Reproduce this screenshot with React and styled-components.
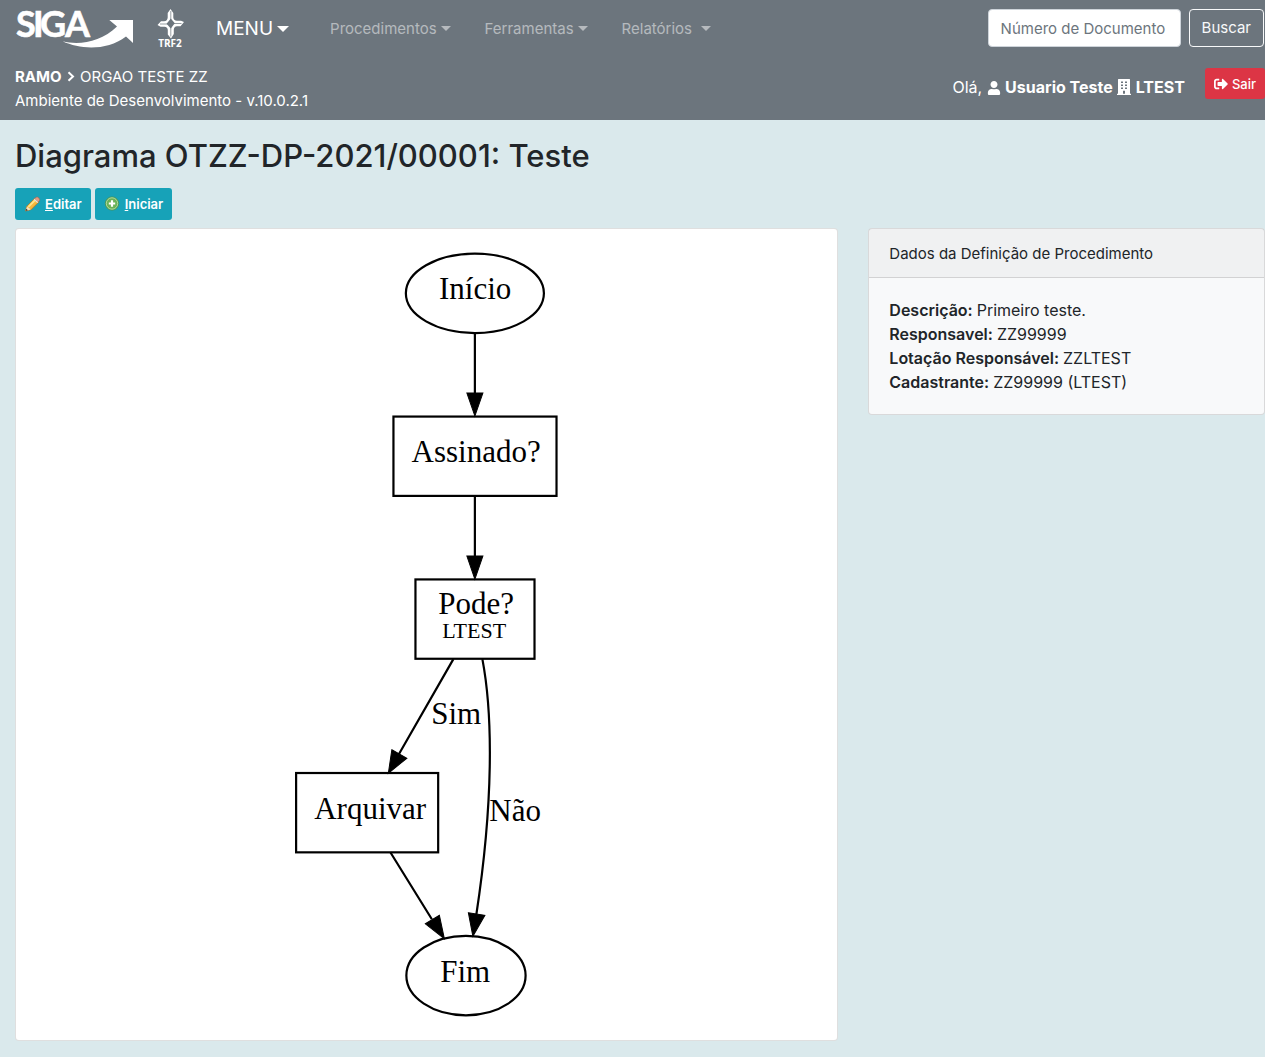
import React from "react";
import styled, { createGlobalStyle, css } from "styled-components";
import { FaSignOutAlt, FaUser } from "react-icons/fa";

const GlobalStyle = createGlobalStyle`
  *, *::before, *::after { box-sizing: border-box; }
  body {
    margin: 0;
    background: #dae9ec;
    color: #212529;
    font-family: Inter, "Liberation Sans", sans-serif;
    font-size: 15px;
    line-height: 24px;
  }
`;

const Header = styled.header`
  background: #6c757d;
  color: #fff;
  padding-bottom: 11px;
`;

const NavBar = styled.nav`
  display: flex;
  align-items: center;
  height: 56px;
  padding: 0 1px 0 16px;
`;

const Brand = styled.a`
  display: flex;
  align-items: center;
  gap: 21px;
  margin-right: 31px;
  color: #fff;
  svg {
    overflow: visible;
  }
`;

const MenuList = styled.ul`
  display: flex;
  flex: 1;
  align-items: center;
  gap: 34px;
  margin: 0;
  padding: 0;
  list-style: none;
`;

const MenuItem = styled.li`
  margin-right: ${(p) => (p.$main ? "7px" : "0")};
`;

const MenuButton = styled.button`
  display: flex;
  align-items: center;
  gap: ${(p) => (p.$wide ? "9px" : "4px")};
  padding: 1px 0 0;
  border: 0;
  background: none;
  font: inherit;
  cursor: pointer;
  color: rgba(255, 255, 255, 0.5);
  ${(p) =>
    p.$main &&
    css`
      color: #fff;
      font-size: 19px;
    `}

  &::after {
    content: "";
    border-top: ${(p) => (p.$main ? "6px" : "5px")} solid;
    border-left: ${(p) => (p.$main ? "6px" : "5px")} solid transparent;
    border-right: ${(p) => (p.$main ? "6px" : "5px")} solid transparent;
  }
`;

const SearchForm = styled.form`
  display: flex;
  gap: 8px;
`;

const SearchInput = styled.input`
  width: 193px;
  height: 38px;
  padding: 6px 12px;
  border: 1px solid #ced4da;
  border-radius: 4px;
  background: #fff;
  color: #495057;
  font: inherit;
  &::placeholder {
    color: #6c757d;
    opacity: 1;
  }
`;

const SearchButton = styled.button`
  height: 38px;
  padding: 0 12px;
  border: 1px solid #f8f9fa;
  border-radius: 4px;
  background: none;
  color: #f8f9fa;
  font: inherit;
  cursor: pointer;
`;

const UserBar = styled.div`
  display: flex;
  justify-content: space-between;
  align-items: flex-start;
  padding: 8px 0 0 15px;
`;

const Place = styled.div`
  padding-top: 1px;
  margin-bottom: -4px;
  svg {
    margin: 0 1px;
    vertical-align: 0;
  }
`;

const Session = styled.div`
  display: flex;
  align-items: center;
  gap: 20px;
  padding-top: 4px;
`;

const Greeting = styled.span`
  padding-top: 7px;
  font-size: 16px;
  svg {
    vertical-align: -2px;
  }
`;

const LogoutButton = styled.button`
  display: flex;
  align-items: center;
  gap: 4px;
  height: 31px;
  padding: 0 9px;
  border: 0;
  border-radius: 3px;
  background: #dc3545;
  color: #fff;
  font: inherit;
  font-size: 13px;
  font-weight: 500;
  cursor: pointer;
`;

const Main = styled.main`
  padding: 16px 0 16px 15px;
`;

const Title = styled.h2`
  margin: 0 0 12px;
  font-size: 31px;
  font-weight: 500;
  line-height: 40px;
`;

const Actions = styled.div`
  display: flex;
  gap: 4px;
  margin-bottom: 8px;
`;

const ActionLink = styled.a`
  display: flex;
  align-items: center;
  gap: 4px;
  height: 32px;
  padding: 0 9px;
  border-radius: 3px;
  background: #17a2b8;
  color: #fff;
  font-size: 13px;
  font-weight: 600;
  text-decoration: none;
`;

const Columns = styled.div`
  display: grid;
  grid-template-columns: calc((100% + 30px) * 2 / 3 - 30px) 1fr;
  gap: 30px;
  align-items: start;
`;

const Card = styled.section`
  border: 1px solid rgba(0, 0, 0, 0.125);
  border-radius: 4px;
  background: ${(p) => (p.$muted ? "#f8f9fa" : "#fff")};
`;

const CardHeader = styled.div`
  padding: 13px 20px 11px;
  border-bottom: 1px solid rgba(0, 0, 0, 0.125);
  background: rgba(0, 0, 0, 0.03);
`;

const CardBody = styled.div`
  padding: 20px;
`;

const Details = styled.dl`
  margin: 0;
  font-size: 16px;
`;

const Detail = styled.div`
  display: flex;
  gap: 4px;
`;

const Term = styled.dt`
  font-weight: 600;
`;

const Value = styled.dd`
  margin: 0;
`;

const Diagram = styled.svg`
  display: block;
  width: 100%;
  height: auto;
  font-family: "Liberation Serif", serif;
  font-size: 31px;
  text-anchor: middle;
`;

const SmallLabel = styled.text`
  font-size: 22px;
`;

function SigaLogo() {
  return (
    <svg width="118" height="44" viewBox="16 6 118 44" fill="#fff" role="img" aria-label="SIGA">
      <text
        x="16 33 40 65"
        y="37"
        fontFamily="Lato, sans-serif"
        fontSize="36"
        fontWeight="700"
        stroke="#fff"
        strokeWidth="0.600"
      >
        SIGA
      </text>
      <path d="M62.500 41.300C79 45.600 101 42.200 117 26.600L109.300 20H133V43L126 36.500C107 50.800 81 49.800 62.500 41.300Z" />
    </svg>
  );
}

function CourtLogo() {
  return (
    <svg width="30" height="44" viewBox="155 6 30 44" fill="#fff" role="img" aria-label="TRF2">
      <path d="M170.500 9L173.300 13V17.500Q173.500 20.500 177 20.700H181L184 22L180.500 26.200H177Q174 26.500 173.800 29.500V34L171 38.500L167.800 34.500V30Q167.600 27 164.500 26.800H160.500L157.500 25L161 21.200H164Q167.500 21 167.700 17.500V13Z" />
      <path d="M170.800 18.500L174.800 23.300L170.800 28.500L166.600 23.800Z" fill="#6c757d" />
      <path
        d="M170.800 11V20M173.500 23.500H181.500M170.800 27V36.500M168 24H160"
        fill="none"
        stroke="#6c757d"
        strokeWidth="0.700"
      />
      <text x="170" y="47" fontFamily="Open Sans, sans-serif" fontSize="10" fontWeight="700" textAnchor="middle">
        TRF2
      </text>
    </svg>
  );
}

function ChevronIcon() {
  return (
    <svg width="8" height="11" viewBox="0 0 8 11" fill="none" stroke="currentColor" strokeWidth="2" aria-hidden="true">
      <path d="M1.500 1.200L6 5.500L1.500 9.800" />
    </svg>
  );
}

function BuildingIcon() {
  return (
    <svg width="14" height="16" viewBox="0 0 14 16" fill="currentColor" aria-hidden="true">
      <path
        fillRule="evenodd"
        d="M1.600 0H12.400Q13 0 13 .6V14.800H14V16H0V14.800H1V.6Q1 0 1.600 0ZM4 2.500V4H6V2.500ZM8 2.500V4H10V2.500ZM4 5.500V7H6V5.500ZM8 5.500V7H10V5.500ZM4 8.500V10H6V8.500ZM8 8.500V10H10V8.500ZM6 11.800V14.800H8V11.800Z"
      />
    </svg>
  );
}

function PencilIcon() {
  return (
    <svg width="17" height="17" viewBox="0 0 17 17" aria-hidden="true">
      <path d="M1.500 15L3 10.200L10.700 2.500L14.800 6L7.200 13.500Z" fill="#f6b93e" stroke="#b9741e" strokeWidth="0.800" />
      <path d="M4.300 10.800L11.200 4" stroke="#ffe58a" strokeWidth="1.800" />
      <path d="M10.500 2.700L12.200 1.200Q13.500 .6 14.800 1.900Q16.100 3.200 15.600 4.500L14 6.300Z" fill="#e49a83" stroke="#a9624c" strokeWidth="0.600" />
      <path d="M10.200 3.200L13.800 6.600" stroke="#e5e5dc" strokeWidth="1.300" />
      <path d="M1.500 15L3 10.500L6.900 13.600Z" fill="#f4dfbd" />
      <path d="M1.500 15L2.300 12.800L4 14.200Z" fill="#333" />
    </svg>
  );
}

function AddIcon() {
  return (
    <svg width="17" height="17" viewBox="0 0 17 17" aria-hidden="true">
      <circle cx="8" cy="7.500" r="6.600" fill="#6bb257" stroke="#4b914b" strokeWidth="0.800" />
      <circle cx="8" cy="7.500" r="5.700" fill="none" stroke="#b5dda5" strokeWidth="0.900" />
      <path d="M8 4.300V10.700M4.800 7.500H11.200" stroke="#fff" strokeWidth="2.200" />
    </svg>
  );
}

function ProcedureDiagram() {
  return (
    <Diagram viewBox="36 249 781 771" role="img" aria-label="Diagrama do procedimento">
      <g fill="none" stroke="#000" strokeWidth="2.200">
        <ellipse cx="474.700" cy="293.300" rx="69" ry="39.700" />
        <rect x="393.300" y="416.500" width="163" height="79.300" />
        <rect x="415.300" y="579.300" width="119" height="79.300" />
        <rect x="296" y="772.800" width="142" height="79.300" />
        <ellipse cx="465.800" cy="975.300" rx="59.600" ry="39.700" />
        <path d="M474.700 333V394M474.700 496V557M453.200 659L398.700 754M482.200 659C493 716 493 804 476.200 914M390.200 852L431.700 919" />
      </g>
      <g stroke="#000" strokeWidth="1">
        <path d="M466.700 393H482.700L474.700 416Z" />
        <path d="M466.700 556H482.700L474.700 579Z" />
        <path d="M391.700 749.500L406.700 758L388.200 773Z" />
        <path d="M468.200 912.500L484.700 915L472.700 936Z" />
        <path d="M425.200 923.500L439.200 915L444.200 938.500Z" />
      </g>
      <text x="475" y="299">Início</text>
      <text x="476" y="462">Assinado?</text>
      <text x="476" y="614">Pode?</text>
      <SmallLabel x="474" y="638">LTEST</SmallLabel>
      <text x="456" y="724">Sim</text>
      <text x="370" y="819">Arquivar</text>
      <text x="515" y="821">Não</text>
      <text x="465" y="982">Fim</text>
    </Diagram>
  );
}

const menus = [
  { label: "MENU", main: true },
  { label: "Procedimentos" },
  { label: "Ferramentas" },
  { label: "Relatórios", wide: true },
];

const details = [
  ["Descrição:", "Primeiro teste."],
  ["Responsavel:", "ZZ99999"],
  ["Lotação Responsável:", "ZZLTEST"],
  ["Cadastrante:", "ZZ99999 (LTEST)"],
];

export default function App() {
  return (
    <>
      <GlobalStyle />
      <Header>
        <NavBar>
          <Brand href="#">
            <SigaLogo />
            <CourtLogo />
          </Brand>
          <MenuList>
            {menus.map((m) => (
              <MenuItem key={m.label} $main={m.main}>
                <MenuButton type="button" $main={m.main} $wide={m.wide}>
                  {m.label}
                </MenuButton>
              </MenuItem>
            ))}
          </MenuList>
          <SearchForm onSubmit={(e) => e.preventDefault()}>
            <SearchInput type="text" aria-label="Número de Documento" placeholder="Número de Documento" />
            <SearchButton type="submit">Buscar</SearchButton>
          </SearchForm>
        </NavBar>
        <UserBar>
          <Place>
            <div>
              <strong>RAMO</strong> <ChevronIcon /> ORGAO TESTE ZZ
            </div>
            <div>Ambiente de Desenvolvimento - v.10.0.2.1</div>
          </Place>
          <Session>
            <Greeting>
              Olá, <FaUser size={14} /> <strong>Usuario Teste</strong> <BuildingIcon /> <strong>LTEST</strong>
            </Greeting>
            <LogoutButton type="button">
              <FaSignOutAlt size={14} />
              Sair
            </LogoutButton>
          </Session>
        </UserBar>
      </Header>
      <Main>
        <Title>Diagrama OTZZ-DP-2021/00001: Teste</Title>
        <Actions>
          <ActionLink href="#editar">
            <PencilIcon />
            <span><u>E</u>ditar</span>
          </ActionLink>
          <ActionLink href="#iniciar">
            <AddIcon />
            <span><u>I</u>niciar</span>
          </ActionLink>
        </Actions>
        <Columns>
          <Card>
            <CardBody>
              <ProcedureDiagram />
            </CardBody>
          </Card>
          <Card $muted>
            <CardHeader>Dados da Definição de Procedimento</CardHeader>
            <CardBody>
              <Details>
                {details.map(([term, value]) => (
                  <Detail key={term}>
                    <Term>{term}</Term>
                    <Value>{value}</Value>
                  </Detail>
                ))}
              </Details>
            </CardBody>
          </Card>
        </Columns>
      </Main>
    </>
  );
}
